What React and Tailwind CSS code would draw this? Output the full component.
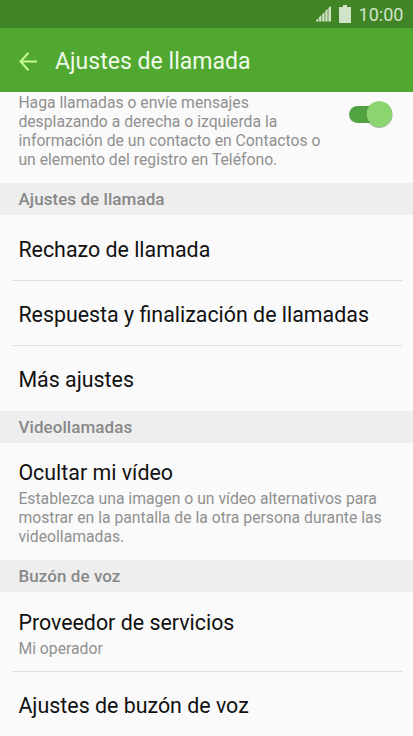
function SectionHeader({ children }) {
  return (
    <h2 className="flex h-8 shrink-0 items-center bg-[#eeeeee] pt-[2px] pl-[18.5px] text-[17px] font-medium tracking-[0.06px] whitespace-nowrap text-[#888888]">
      {children}
    </h2>
  );
}

function Title({ children }) {
  return (
    <div className="origin-left translate-x-[0.4px] scale-x-[0.972] text-[22px] leading-[26px] whitespace-nowrap text-[#111111]">
      {children}
    </div>
  );
}

function Summary({ children }) {
  return (
    <p className="origin-left translate-x-[0.4px] scale-x-[0.983] text-[16px] leading-[19px] whitespace-nowrap text-[#909090]">
      {children}
    </p>
  );
}

function Divider() {
  return <div className="mr-[11px] ml-3 h-px shrink-0 bg-[#dddddd]" />;
}

function Toggle() {
  return (
    <svg width="48" height="32" viewBox="0 0 48 32" className="shrink-0">
      <rect x="3" y="7" width="38" height="17" rx="8.5" fill="#51a342" />
      <circle cx="33.3" cy="15.7" r="13.3" fill="#4b6b42" opacity="0.45" />
      <circle cx="33.3" cy="15.1" r="12.8" fill="#8ad570" />
    </svg>
  );
}

export default function App() {
  return (
    <div className="flex h-[736px] w-full flex-col overflow-hidden bg-[#fafafa] font-['Roboto',sans-serif]">
      <div className="flex h-7 shrink-0 items-center justify-end bg-[#408426] pr-[9.6px] text-[#d0e3c8]">
        <svg width="16" height="16" viewBox="0 0 16 16" fill="currentColor" className="mr-[7px]">
          <path d="M0 15.5V14.4L2.4 12V15.5ZM3.1 15.5V11.3L5.4 9V15.5ZM6.2 15.5V8.2L8.5 5.9V15.5ZM9.3 15.5V5.1L11.6 2.8V15.5ZM12.4 15.5V2L15 0V15.5Z" />
        </svg>
        <svg width="12" height="18" viewBox="0 0 12 18" fill="currentColor" className="mr-[7.5px]">
          <path d="M4 0h4v2h4v16H0V2h4z" />
        </svg>
        <span className="pt-px text-[18px] leading-[27px]">10:00</span>
      </div>
      <header className="flex h-16 shrink-0 items-center bg-[#50a830] pt-[3px] pl-[19px]">
        <svg width="18" height="20" viewBox="0 0 18 20" fill="none" stroke="#c5fa92" strokeWidth="2" className="mr-[18px]">
          <path d="M18 9.5H1.5M9.5 0.8L1.5 9.5L9.5 18.2" />
        </svg>
        <h1 className="text-[23px] leading-7 tracking-[0.03px] whitespace-nowrap text-[#f0faeb]">Ajustes de llamada</h1>
      </header>
      <section className="flex h-[91px] shrink-0 justify-between pt-px pr-[19px] pl-[18px]">
        <Summary>
          Haga llamadas o envíe mensajes<br />
          desplazando a derecha o izquierda la<br />
          información de un contacto en Contactos o<br />
          un elemento del registro en Teléfono.
        </Summary>
        <div className="-ml-5 pt-[6px]">
          <Toggle />
        </div>
      </section>
      <SectionHeader>Ajustes de llamada</SectionHeader>
      <div className="flex h-[65px] shrink-0 items-center pt-[5px] pl-[18px]">
        <Title>Rechazo de llamada</Title>
      </div>
      <Divider />
      <div className="flex h-16 shrink-0 items-center pt-1 pl-[18px]">
        <Title>Respuesta y finalización de llamadas</Title>
      </div>
      <Divider />
      <div className="flex h-[65px] shrink-0 items-center pt-[3px] pl-[18px]">
        <Title>Más ajustes</Title>
      </div>
      <SectionHeader>Videollamadas</SectionHeader>
      <div className="flex h-[117px] shrink-0 flex-col items-start gap-[3px] pt-[17px] pl-[18px]">
        <Title>Ocultar mi vídeo</Title>
        <Summary>
          Establezca una imagen o un vídeo alternativos para<br />
          mostrar en la pantalla de la otra persona durante las<br />
          videollamadas.
        </Summary>
      </div>
      <SectionHeader>Buzón de voz</SectionHeader>
      <div className="flex h-[79px] shrink-0 flex-col items-start gap-[3px] pt-[18px] pl-[18px]">
        <Title>Proveedor de servicios</Title>
        <Summary>Mi operador</Summary>
      </div>
      <Divider />
      <div className="flex h-16 shrink-0 items-center pt-1 pl-[18px]">
        <Title>Ajustes de buzón de voz</Title>
      </div>
    </div>
  );
}
